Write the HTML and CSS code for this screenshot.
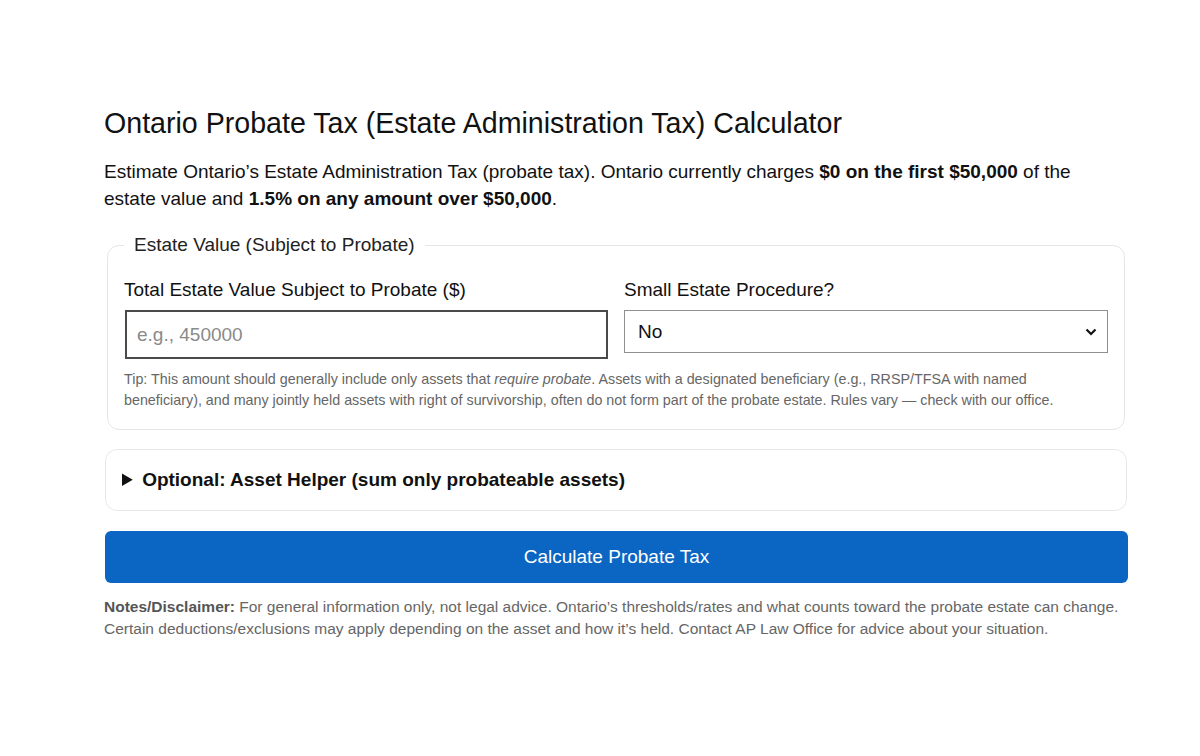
FILE: index.html
```html
<!DOCTYPE html>
<html lang="en">
<head>
<meta charset="utf-8">
<title>Ontario Probate Tax Calculator</title>
<link rel="stylesheet" href="styles.css">
</head>
<body>
<main class="calc">
  <h1 class="calc-title">Ontario Probate Tax (Estate Administration Tax) Calculator</h1>
  <p class="calc-intro">Estimate Ontario’s Estate Administration Tax (probate tax). Ontario currently charges <strong>$0 on the first $50,000</strong> of the estate value and <strong>1.5% on any amount over $50,000</strong>.</p>

  <fieldset class="panel">
    <legend class="panel-legend">Estate Value (Subject to Probate)</legend>
    <div class="row">
      <div class="field">
        <label class="field-label" for="estate">Total Estate Value Subject to Probate ($)</label>
        <input class="text-input" id="estate" type="text" placeholder="e.g., 450000">
      </div>
      <div class="field">
        <label class="field-label" for="small">Small Estate Procedure?</label>
        <div class="select-wrap">
          <select class="select-input" id="small">
            <option>No</option>
            <option>Yes</option>
          </select>
          <svg class="chev" width="12" height="8" viewBox="0 0 12 8"><path d="M1.5 1.5 L6 6 L10.5 1.5" fill="none" stroke="#111" stroke-width="2.2"/></svg>
        </div>
      </div>
    </div>
    <p class="tip">Tip: This amount should generally include only assets that <em>require probate</em>. Assets with a designated beneficiary (e.g., RRSP/TFSA with named beneficiary), and many jointly held assets with right of survivorship, often do not form part of the probate estate. Rules vary — check with our office.</p>
  </fieldset>

  <details class="helper">
    <summary class="helper-summary">Optional: Asset Helper (sum only probateable assets)</summary>
  </details>

  <button class="calc-btn" type="button">Calculate Probate Tax</button>

  <p class="notes"><strong>Notes/Disclaimer:</strong> For general information only, not legal advice. Ontario’s thresholds/rates and what counts toward the probate estate can change. Certain deductions/exclusions may apply depending on the asset and how it’s held. Contact AP Law Office for advice about your situation.</p>
</main>
</body>
</html>
```

FILE: styles.css
```css
* { box-sizing: border-box; }
html, body { margin: 0; padding: 0; background: #fff; }
body {
  font-family: "Liberation Sans", Arial, sans-serif;
  color: #111;
}
.calc {
  width: 1024px;
  margin-left: 104px;
  padding-top: 106px;
}
.calc-title {
  font-size: 28.6px;
  font-weight: 400;
  line-height: 34px;
  margin: 0 0 18px;
  color: #111;
}
.calc-intro {
  font-size: 19px;
  line-height: 27px;
  margin: 0 0 22px;
  padding-right: 20px;
  color: #111;
}
.calc-intro strong { font-weight: 700; }

.panel {
  margin: 0 3px;
  padding: 6px 16px 18px;
  border: 1px solid #e6e6e6;
  border-radius: 12px;
}
.panel-legend {
  font-size: 19px;
  padding: 0 10px;
  color: #222;
  line-height: 22px;
}
.row {
  display: grid;
  grid-template-columns: 1fr 1fr;
  gap: 16px;
  margin-top: 17px;
}
.field { display: flex; flex-direction: column; }
.field-label {
  font-size: 19px;
  line-height: 22px;
  margin-bottom: 9px;
  color: #111;
}
.text-input {
  height: 49px;
  font-family: inherit;
  font-size: 19px;
  padding: 0 10px;
  border: 2px solid #4a4a4a;
  border-radius: 0;
  margin-left: 1px;
  color: #111;
  outline: none;
}
.text-input::placeholder { color: #8a8a8a; }
.select-wrap { position: relative; }
.select-input {
  width: 100%;
  height: 43px;
  font-family: inherit;
  font-size: 19px;
  padding: 0 13px;
  border: 1px solid #8f8f8f;
  border-radius: 0;
  background: #fff;
  color: #111;
  appearance: none;
  -webkit-appearance: none;
}
.chev {
  position: absolute;
  right: 11px;
  top: 18px;
  pointer-events: none;
}
.tip {
  font-size: 14.3px;
  line-height: 21px;
  color: #666;
  margin: 10px 0 0;
  max-width: 950px;
}

.helper {
  margin-top: 19px;
  margin-left: 1px;
  margin-right: 1px;
  border: 1px solid #e8e8e8;
  border-radius: 12px;
  padding: 19px 16px 19px;
}
.helper-summary {
  font-size: 19px;
  font-weight: 700;
  line-height: 22px;
  color: #111;
  cursor: pointer;
}

.calc-btn {
  display: block;
  width: 1023px;
  margin: 20px 0 0 1px;
  height: 52px;
  border: 0;
  border-radius: 6px;
  background: #0b65c2;
  color: #fff;
  font-family: inherit;
  font-size: 19px;
  cursor: pointer;
}
.notes {
  font-size: 15.5px;
  line-height: 22px;
  color: #666;
  margin: 13px 0 0;
}
.notes strong { color: #555; }
```
